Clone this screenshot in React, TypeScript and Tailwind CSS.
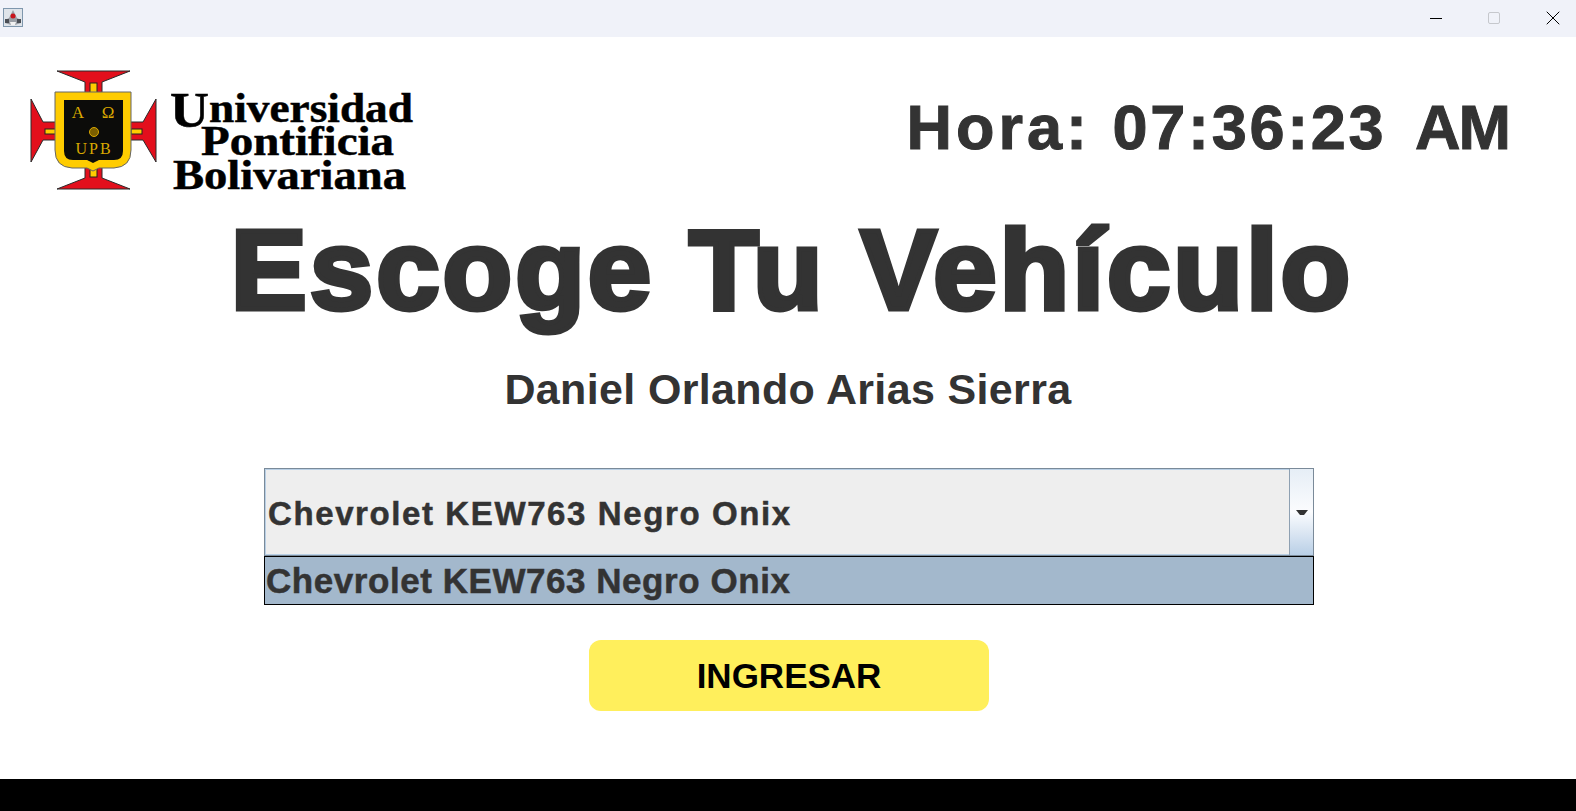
import { X } from "lucide-react"

function JavaIcon() {
  return (
    <svg width="20" height="19" viewBox="0 0 20 19" className="block">
      <rect x="0.5" y="0.5" width="19" height="18" fill="#dfe4ea" stroke="#7f97ad" />
      <path d="M10 2 L14 10 L18 12 V15 L12 17 H8 L2 15 V12 L6 10 Z" fill="#9a9ea5" />
      <path d="M2 11 H6 V15 H2 Z M14 11 H18 V15 H14 Z" fill="#4a4e55" />
      <path d="M7 14 H13 L12 17 H8 Z" fill="#f2f2f2" />
      <circle cx="10" cy="8" r="2.5" fill="#c8141c" />
    </svg>
  )
}

// logo con coordenadas de pantalla gracias al viewBox
function UpbLogo() {
  return (
    <svg width="384" height="134" viewBox="30 69 384 134" className="block shrink-0">
      {/* cruz */}
      <g fill="#e30f1c" stroke="#2a2a2a" strokeWidth="1">
        <path d="M57 71 H130 L102 82 V93 H85 V82 Z" />
        <path d="M57 189 H130 L102 178 V167 H85 V178 Z" />
        <path d="M31 99 V162 L43 140 H56 V122 H43 Z" />
        <path d="M156 99 V162 L143 140 H130 V122 H143 Z" />
      </g>
      <g fill="#ffcc00" stroke="#222" strokeWidth="1">
        <rect x="90" y="83" width="7" height="10" />
        <rect x="90" y="168" width="7" height="9" />
        <rect x="45" y="129" width="11" height="5" />
        <rect x="131" y="129" width="11" height="5" />
      </g>
      {/* escudo */}
      <path d="M55 92 H131 V150 Q131 167 114 168 H99 L93 171 L87 168 H72 Q55 167 55 150 Z" fill="#ffcc00" stroke="#666" strokeWidth="1" />
      <path d="M64 100 H123 V151 Q123 160 114 160 H99 L93 163 L87 160 H73 Q64 160 64 151 Z" fill="#0c0c0a" />
      <g fill="#d9a800" fontFamily="'Liberation Serif', serif" textAnchor="middle">
        <text x="78" y="118" fontSize="17">Α</text>
        <text x="108" y="118" fontSize="17">Ω</text>
        <text x="94" y="154" fontSize="16" letterSpacing="2">UPB</text>
      </g>
      <circle cx="94" cy="132" r="4.5" fill="#7a5e00" stroke="#d9a800" strokeWidth="1" />
      {/* nombre */}
      <g fill="#000000" stroke="#000000" strokeWidth="0.5" fontFamily="'Liberation Serif', serif" fontWeight="700" fontSize="42">
        <text x="170" y="122" textLength="243" lengthAdjust="spacingAndGlyphs">
          <tspan fontSize="50" dy="5">U</tspan>
          <tspan dy="-5">niversidad</tspan>
        </text>
        <text x="201" y="155" textLength="193" lengthAdjust="spacingAndGlyphs">Pontificia</text>
        <text x="173" y="189" textLength="233" lengthAdjust="spacingAndGlyphs">Bolivariana</text>
      </g>
    </svg>
  )
}

function ComboArrow() {
  return (
    <svg width="12" height="6" viewBox="0 0 12 6" className="block">
      <path d="M0 0 H12 L8 5 H4 Z" fill="#333333" />
    </svg>
  )
}

export default function App() {
  return (
    <div className="flex h-[811px] w-[1576px] flex-col overflow-hidden bg-white font-['Liberation_Sans',Arial,sans-serif] text-[#333333]">
      {/* barra de titulo */}
      <div className="flex h-[37px] shrink-0 items-start justify-between bg-[#f0f2f9]">
        <div className="pl-[3px] pt-[8px]">
          <JavaIcon />
        </div>
        <div className="flex h-[36px] items-center pr-[11px]">
          <div className="h-px w-[12px] bg-black" />
          <div className="ml-[46px] h-[12px] w-[12px] rounded-[2px] border border-[#c6c8cd]" />
          <X size={24} strokeWidth={1} color="#000000" className="ml-[41px]" />
        </div>
      </div>

      <div className="flex min-h-0 flex-1 flex-col">
        {/* cabecera */}
        <div className="flex h-[160px] shrink-0 items-start justify-between pl-[30px] pr-[67px] pt-[32px]">
          <UpbLogo />
          <div className="pt-[21px] text-[63px] font-bold leading-[75px] whitespace-pre [-webkit-text-stroke:1px_#333333]">
            <span className="tracking-[4px]">Hora: </span>
            <span className="tracking-[2.7px]">07:36:23</span>
            <span className="tracking-[-2px]">  AM</span>
          </div>
        </div>

        {/* titulo */}
        <h1 className="flex h-[150px] shrink-0 items-center justify-center pb-[5px] pl-[8px] text-[114px] font-bold leading-none tracking-[3px] [-webkit-text-stroke:5px_#333333]">
          Escoge Tu Vehículo
        </h1>

        <div className="mt-[17px] text-center text-[43px] font-bold leading-[50px] tracking-[0.35px]">
          Daniel Orlando Arias Sierra
        </div>

        {/* combo */}
        <div className="ml-[264px] mt-[54px] w-[1050px]">
          <div className="flex h-[88px] border border-[#7a8a99] bg-[#eeeeee] shadow-[inset_0_0_0_1px_#b8cfe5]">
            <div className="flex flex-1 items-center pl-[3px] pt-[3px] text-[33px] font-bold tracking-[1.6px] [-webkit-text-stroke:0.5px_#333333]">
              Chevrolet KEW763 Negro Onix
            </div>
            <div className="flex w-[24px] items-center justify-center border-l border-[#8ea0b2] bg-gradient-to-b from-[#e6eef6] via-[#fbfcfe] to-[#b9cfe6] pt-[2px]">
              <ComboArrow />
            </div>
          </div>
          <div className="flex h-[49px] items-center border border-black bg-[#a3b8cc] pl-[1px] pt-[1px] text-[35px] font-bold tracking-[0.55px] [-webkit-text-stroke:0.5px_#333333]">
            Chevrolet KEW763 Negro Onix
          </div>
        </div>

        {/* boton */}
        <button className="ml-[589px] mt-[35px] flex h-[71px] w-[400px] items-center justify-center rounded-[12px] bg-[#ffef5c] pt-[1px] text-[35px] font-bold text-black">
          INGRESAR
        </button>
      </div>

      <div className="h-[32px] shrink-0 bg-black" />
    </div>
  )
}
